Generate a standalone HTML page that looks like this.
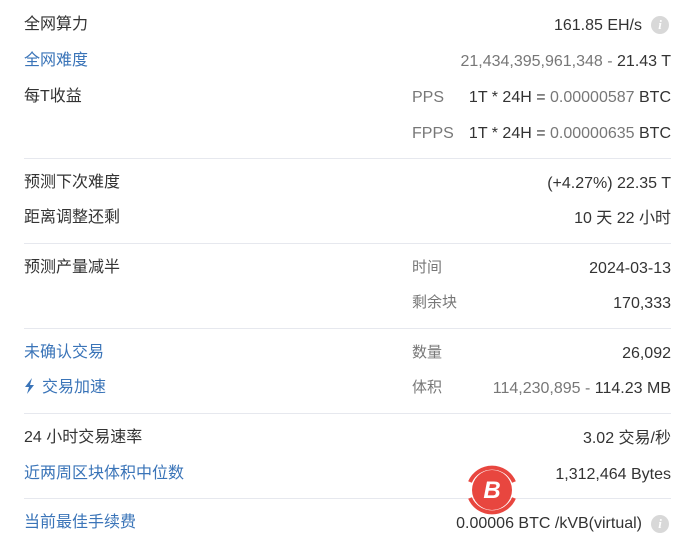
<!DOCTYPE html>
<html><head><meta charset="utf-8"><style>
body{margin:0;width:684px;height:538px;background:#fff;position:relative;overflow:hidden;font-family:"Liberation Sans","Noto Sans CJK SC",sans-serif;font-size:16px;color:#333}
.t{position:absolute;line-height:20px;white-space:nowrap}
.l{left:24px;font-size:16px}
.b{color:#3a74b8}
.r{right:13px;text-align:right}
.g{color:#777}
.hr{position:absolute;left:24px;width:647px;height:1px;background:#e6e8ee}
.info{position:absolute;width:18px;height:18px;border-radius:50%;background:#d8d8d8;color:#fff;font:italic bold 13px "Liberation Serif",serif;text-align:center;line-height:18px}
</style></head><body>
<div class="t l" style="top:15px">全网算力</div>
<div class="t r" style="top:16px;right:42px">161.85 EH/s</div>
<div class="info" style="left:651px;top:16px">i</div>

<div class="t l b" style="top:51px">全网难度</div>
<div class="t r" style="top:52px"><span class="g">21,434,395,961,348 - </span>21.43 T</div>

<div class="t l" style="top:87px">每T收益</div>
<div class="t g" style="top:88px;left:412px">PPS</div>
<div class="t r" style="top:88px">1T * 24H = <span class="g">0.00000587</span> BTC</div>
<div class="t g" style="top:124px;left:412px">FPPS</div>
<div class="t r" style="top:124px">1T * 24H = <span class="g">0.00000635</span> BTC</div>
<div class="hr" style="top:158px"></div>

<div class="t l" style="top:173px">预测下次难度</div>
<div class="t r" style="top:174px">(+4.27%) 22.35 T</div>
<div class="t l" style="top:208px">距离调整还剩</div>
<div class="t r" style="top:209px">10 天 22 小时</div>
<div class="hr" style="top:243px"></div>

<div class="t l" style="top:258px">预测产量减半</div>
<div class="t g" style="top:258px;left:412px;font-size:15px">时间</div>
<div class="t r" style="top:259px">2024-03-13</div>
<div class="t g" style="top:293px;left:412px;font-size:15px">剩余块</div>
<div class="t r" style="top:294px">170,333</div>
<div class="hr" style="top:328px"></div>

<div class="t l b" style="top:343px">未确认交易</div>
<div class="t g" style="top:343px;left:412px;font-size:15px">数量</div>
<div class="t r" style="top:344px">26,092</div>
<div class="t l b" style="top:378px"><svg width="12" height="16" viewBox="0 0 12 16" style="vertical-align:-2px;margin-right:6px"><path d="M8 0L1 9h4l-2 7 7-9H6z" fill="#3a74b8"/></svg>交易加速</div>
<div class="t g" style="top:378px;left:412px;font-size:15px">体积</div>
<div class="t r" style="top:379px"><span class="g">114,230,895 - </span>114.23 MB</div>
<div class="hr" style="top:413px"></div>

<div class="t l" style="top:428px">24 小时交易速率</div>
<div class="t r" style="top:429px">3.02 交易/秒</div>
<div class="t l b" style="top:464px">近两周区块体积中位数</div>
<div class="t r" style="top:465px">1,312,464 Bytes</div>
<div class="hr" style="top:498px"></div>

<div class="t l b" style="top:513px">当前最佳手续费</div>
<div class="t r" style="top:514px;right:42px">0.00006 BTC /kVB(virtual)</div>
<div class="info" style="left:651px;top:515px">i</div>

<svg style="position:absolute;left:462px;top:460px" width="60" height="60" viewBox="0 0 60 60">
<path d="M8 22A24 24 0 0 1 52 22" stroke="#e8463f" stroke-width="4" fill="none"/>
<path d="M8 38A24 24 0 0 0 52 38" stroke="#e8463f" stroke-width="4" fill="none"/>
<circle cx="30" cy="30" r="20" fill="#e8463f"/>
<text x="30" y="38" font-family="Liberation Sans" font-weight="bold" font-style="italic" font-size="24" fill="#fff" text-anchor="middle">B</text>
</svg>
</body></html>
